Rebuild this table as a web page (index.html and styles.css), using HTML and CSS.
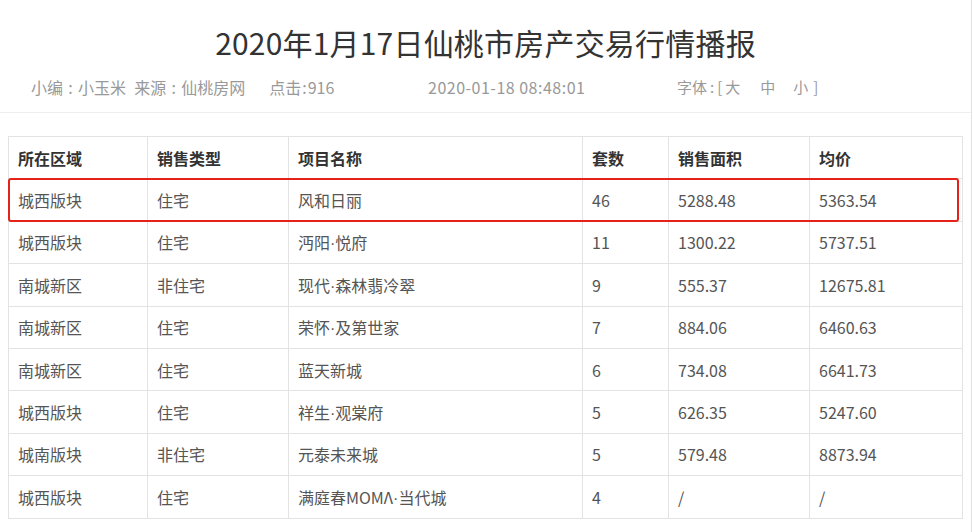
FILE: index.html
```html
<!DOCTYPE html>
<html lang="zh-CN">
<head>
<meta charset="utf-8">
<title>2020年1月17日仙桃市房产交易行情播报</title>
<link rel="stylesheet" href="styles.css">
</head>
<body>
<div class="page">
  <header class="article-head">
    <h1 class="title">2020年1月17日仙桃市房产交易行情播报</h1>
    <div class="meta">
      <span class="meta-info"><span>小编&#8196;:&#8196;小玉米</span><span class="gap1">来源&#8196;:&#8196;仙桃房网</span><span class="gap2">点击&#8202;:&#8202;916</span></span>
      <span class="meta-date">2020-01-18 08:48:01</span>
      <span class="meta-font">字体&#8201;:&#8201;[<span class="fs fs-l">大</span><span class="fs fs-m">中</span><span class="fs fs-s">小</span>]</span>
    </div>
  </header>
  <div class="table-wrap">
    <table class="deals">
      <colgroup>
        <col class="c1"><col class="c2"><col class="c3"><col class="c4"><col class="c5"><col class="c6">
      </colgroup>
      <thead>
        <tr><th>所在区域</th><th>销售类型</th><th>项目名称</th><th>套数</th><th>销售面积</th><th>均价</th></tr>
      </thead>
      <tbody>
        <tr><td>城西版块</td><td>住宅</td><td>风和日丽</td><td>46</td><td>5288.48</td><td>5363.54</td></tr>
        <tr><td>城西版块</td><td>住宅</td><td>沔阳<span class="dot">·</span>悦府</td><td>11</td><td>1300.22</td><td>5737.51</td></tr>
        <tr><td>南城新区</td><td>非住宅</td><td>现代<span class="dot">·</span>森林翡冷翠</td><td>9</td><td>555.37</td><td>12675.81</td></tr>
        <tr><td>南城新区</td><td>住宅</td><td>荣怀<span class="dot">·</span>及第世家</td><td>7</td><td>884.06</td><td>6460.63</td></tr>
        <tr><td>南城新区</td><td>住宅</td><td>蓝天新城</td><td>6</td><td>734.08</td><td>6641.73</td></tr>
        <tr><td>城西版块</td><td>住宅</td><td>祥生<span class="dot">·</span>观棠府</td><td>5</td><td>626.35</td><td>5247.60</td></tr>
        <tr><td>城南版块</td><td>非住宅</td><td>元泰未来城</td><td>5</td><td>579.48</td><td>8873.94</td></tr>
        <tr><td>城西版块</td><td>住宅</td><td>满庭春MOMΛ<span class="dot">·</span>当代城</td><td>4</td><td>/</td><td>/</td></tr>
      </tbody>
    </table>
    <div class="highlight"></div>
  </div>
</div>
</body>
</html>
```
FILE: styles.css
```css
html, body {
  margin: 0;
  padding: 0;
  background: #fff;
}
body {
  font-family: "Microsoft YaHei", "Noto Sans CJK SC", "Noto Sans", sans-serif;
  color: #333;
}
.page {
  width: 971px;
  height: 532px;
  border-right: 1px solid #e2e2e2;
  box-sizing: content-box;
}
.article-head {
  padding-top: 22px;
  padding-bottom: 13px;
  border-bottom: 1px solid #eeeeee;
}
.title {
  margin: 0;
  font-size: 30px;
  font-weight: normal;
  line-height: 40px;
  text-align: center;
  color: #333;
  letter-spacing: 0.2px;
}
.meta {
  display: flex;
  margin-top: 13px;
  padding-left: 31px;
  font-size: 16px;
  line-height: 24px;
  color: #999;
}
.meta-info {
  display: flex;
  width: 397px;
}
.gap1 { margin-left: 8px; }
.gap2 { margin-left: 24px; }
.meta-date {
  width: 249px;
  letter-spacing: 0.5px;
}
.meta-font {
  font-size: 15px;
}
.fs-l { margin: 0 20px 0 3px; }
.fs-m { margin-right: 18px; }
.fs-s { margin-right: 5px; }
.table-wrap {
  position: relative;
  margin: 23px 0 0 8px;
  width: 954px;
}
.deals {
  width: 954px;
  border-collapse: collapse;
  table-layout: fixed;
  font-size: 16px;
}
.c1 { width: 139px; }
.c2 { width: 141px; }
.c3 { width: 294px; }
.c4 { width: 86px; }
.c5 { width: 141px; }
.c6 { width: 153px; }
.deals th,
.deals td {
  border: 1px solid #e3e3e3;
  height: 42.4px;
  padding: 0 9px;
  text-align: left;
  vertical-align: middle;
  box-sizing: border-box;
}
.deals th {
  font-weight: bold;
  color: #333;
}
.deals td {
  color: #555;
}
.dot {
  font-family: "Liberation Sans", sans-serif;
}
.highlight {
  position: absolute;
  left: 0;
  top: 42px;
  width: 951px;
  height: 44px;
  border: 2.5px solid #e3231b;
  border-radius: 3px;
  box-sizing: border-box;
  pointer-events: none;
}
```
